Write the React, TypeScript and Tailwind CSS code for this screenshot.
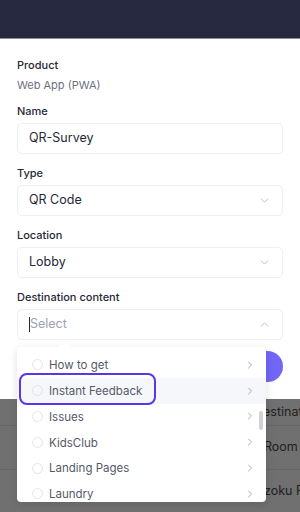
import { ChevronDown, ChevronUp, ChevronRight } from "lucide-react";

const options = ["How to get", "Instant Feedback", "Issues", "KidsClub", "Landing Pages", "Laundry"];

function Label({ children }: { children: React.ReactNode }) {
  return <div className="text-[11px] font-medium text-[#1f2937] leading-[16px] mb-[4px]">{children}</div>;
}

function Field({ value, icon }: { value: string; icon?: "down" | "up" }) {
  return (
    <div className="h-[31px] border border-[#eceef2] rounded-[5px] flex items-center px-[11px] text-[12.5px] text-[#1f2937]">
      <span className="flex-1">{value}</span>
      {icon === "down" && <ChevronDown className="w-[13px] h-[13px] text-[#aab0bf]" strokeWidth={1.5} />}
      {icon === "up" && <ChevronUp className="w-[13px] h-[13px] text-[#aab0bf]" strokeWidth={1.5} />}
    </div>
  );
}

export default function App() {
  return (
    <div
      className="w-[300px] h-[512px] relative overflow-hidden bg-[#707070]"
      style={{ fontFamily: "Inter, 'Liberation Sans', sans-serif" }}
    >
      <div className="h-[39px] bg-[#262940] border-b border-[#8d8e9c]" />

      <div className="bg-white h-[360px] px-[17px] pt-[18px]">
        <Label>Product</Label>
        <div className="text-[11px] text-[#6b7280] leading-[16px] mb-[10px]">Web App (PWA)</div>

        <Label>Name</Label>
        <div className="mb-[11px]">
          <Field value="QR-Survey" />
        </div>

        <Label>Type</Label>
        <div className="mb-[11px]">
          <Field value="QR Code" icon="down" />
        </div>

        <Label>Location</Label>
        <div className="mb-[11px]">
          <Field value="Lobby" icon="down" />
        </div>

        <Label>Destination content</Label>
        <div className="h-[31px] border border-[#eceef2] rounded-[5px] flex items-center px-[11px] text-[12.5px]">
          <span className="w-px h-[15px] bg-[#1f2937]" />
          <span className="flex-1 text-[#9ca3af]">Select</span>
          <ChevronUp className="w-[13px] h-[13px] text-[#aab0bf]" strokeWidth={1.5} />
        </div>

        <div className="flex justify-end mt-[11px]">
          <div className="h-[31px] w-[90px] rounded-full bg-[#7166f5]" />
        </div>
      </div>

      <div className="text-[12.5px] text-[#1e1e1e] overflow-hidden">
        <div className="h-[27px] flex items-center pl-[254px] border-b border-[#676767] whitespace-nowrap">Destination</div>
        <div className="h-[44px] flex items-center pl-[264px] border-b border-[#676767] whitespace-nowrap">Room Directory</div>
        <div className="h-[43px] flex items-center pl-[264px] whitespace-nowrap">zoku Rest</div>
      </div>

      <div className="absolute left-[17px] top-[347px] w-[249px] h-[155px] bg-white rounded-[4px] shadow-[0_2px_8px_rgba(0,0,0,0.12)]">
        <div className="absolute -top-[4px] left-[43px] w-[9px] h-[9px] bg-white rotate-45" />
        <div className="relative pt-[5px] overflow-hidden h-full rounded-[4px]">
          {options.map((o, i) => (
            <div
              key={o}
              className={`h-[25.8px] flex items-center pl-[15px] pr-[10px] ${i === 1 ? "bg-[#f6f7fa]" : ""}`}
            >
              <span className="w-[11px] h-[11px] rounded-full border border-[#e3e5ea] mr-[6px]" />
              <span className="flex-1 text-[11.5px] text-[#555a68] pt-[2px]">{o}</span>
              <ChevronRight className="w-[12px] h-[12px] text-[#8a8f9c]" strokeWidth={1.5} />
            </div>
          ))}
          <div className="absolute right-[3px] top-[64px] w-[4px] h-[19px] rounded-full bg-[#d0d2d7]" />
        </div>
        <div className="absolute left-[2px] top-[26px] w-[137px] h-[32px] rounded-[8px] border-2 border-[#5b35e8]" />
      </div>
    </div>
  );
}
